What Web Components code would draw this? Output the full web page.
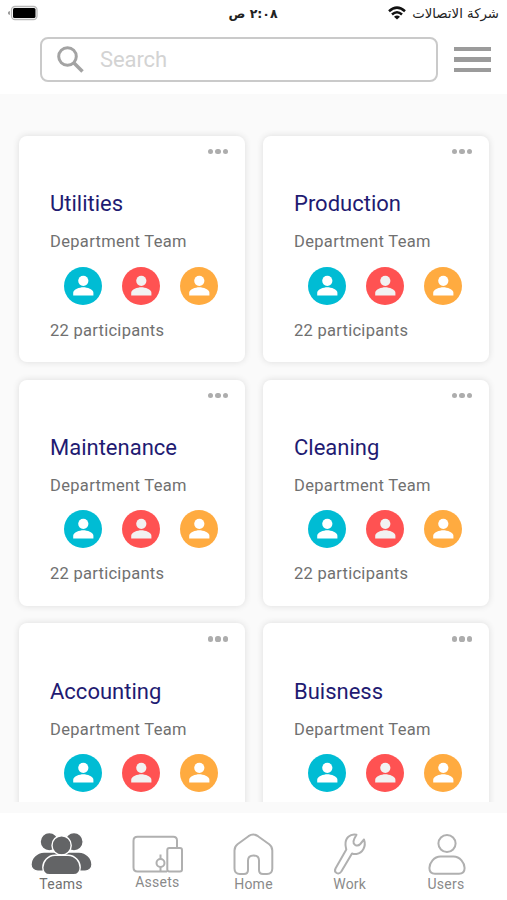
<!DOCTYPE html>
<html lang="en">
<head>
<meta charset="utf-8">
<title>Teams</title>
<style>
  html, body { margin: 0; height: 100%; }
  body { font-family: Roboto, sans-serif; background: #fff; overflow: hidden; }
</style>
</head>
<body>
<team-app></team-app>

<script>
(function () {
  /* Line icons for the tab bar, all drawn in the same 64x44 box. */
  const TAB_ICONS = {
    teams: `
      <g fill="#636466" stroke="#fff" stroke-width="1.4">
        <circle cx="20.3" cy="9.8" r="9.2"/>
        <circle cx="45" cy="9.8" r="9.2"/>
        <path d="M15 20H50C57.500 20 63 26.500 63 32.500C63 36.500 60 39.200 56 39.200H9C5 39.200 2 36.500 2 32.500C2 26.500 7.500 20 15 20Z"/>
        <circle cx="32.6" cy="13.4" r="9.6"/>
        <path d="M26 23.200H39C46.500 23.200 51.200 30 51.200 35.500C51.200 40 48.500 42.800 44.500 42.800H20.500C16.500 42.800 13.800 40 13.800 35.500C13.800 30 18.500 23.200 26 23.200Z"/>
      </g>`,
    assets: `
      <path d="M52 16V8.500Q52 4.800 48.300 4.800H12.500Q8.500 4.800 8.500 8.800V35.500Q8.500 39.500 12.500 39.500H42"/>
      <rect x="42.300" y="16" width="14.700" height="23.500" rx="2"/>
      <circle cx="35.500" cy="31" r="4"/>
      <path d="M35.500 22.500V27M35.500 35V39.500"/>`,
    home: `
      <path d="M27.500 4.200Q32.300 1 37 4.200L48.200 12.200Q51.300 14.500 51.300 18.500V36.500Q51.300 42 46 42H42Q38 42 38 38V28.500Q38 23.500 32.500 23.500Q27 23.500 27 28.500V38Q27 42 23 42H19Q13.500 42 13.500 36.500V18.500Q13.500 14.500 16.500 12.200Z"/>`,
    work: `
      <path d="M38.500 2.800C32 1.500 27 6 27.500 13Q27.800 15.500 28.300 17.500L17.500 36.500C15.500 40.500 20.500 43.500 23.300 39.500L34 21.500Q36 22.300 38.500 22C44.500 21 48.500 14.500 46 7.500L42.300 12Q40 14.500 37 12.800C34.500 11 35 8.500 38.500 2.800Z"/>`,
    users: `
      <circle cx="33" cy="11.500" r="8.600"/>
      <path d="M26.500 24.500H39.500C46 24.500 50.600 31 50.600 36C50.600 39.500 48.500 41.800 45 41.800H21C17.500 41.800 15.400 39.500 15.400 36C15.400 31 20 24.500 26.500 24.500Z"/>`
  };

  function define(name, markup) {
    customElements.define(name, class extends HTMLElement {
      constructor() {
        super();
        this.attachShadow({ mode: 'open' }).innerHTML = markup;
      }
    });
  }

  define('status-bar', `
    <style>
      :host {
        display: grid; grid-template-columns: 1fr auto 1fr; align-items: center; direction: rtl;
        height: 28px; padding: 0 8px 2px 7px; box-sizing: border-box;
        font: 13.300px 'DejaVu Sans', sans-serif; color: #222;
      }
      .carrier { display: flex; align-items: center; gap: 6px; white-space: nowrap; }
      .time { font-size: 12.500px; font-weight: 700; color: #222; }
      .battery { justify-self: end; display: block; }
      svg { display: block; }
    </style>
    <div class="carrier">
      <span class="name">شركة الاتصالات</span>
      <svg width="18" height="14" viewBox="0 0 18 14" fill="none" stroke="#111" stroke-width="2.500">
        <path d="M1 5.200Q9 -2 17 5.200M4 8.500Q9 4 14 8.500"/>
        <path d="M9 13.500L6 10.700Q9 8.500 12 10.700Z" fill="#111" stroke="none"/>
      </svg>
    </div>
    <span class="time">٢:٠٨ ص</span>
    <svg class="battery" width="31" height="16" viewBox="0 0 31 16">
      <rect x="4.500" y="1.500" width="25.500" height="13" rx="3.500" fill="#fff" stroke="#b8b8b8" stroke-width="1.300"/>
      <rect x="6" y="3" width="22.500" height="10" rx="1.500" fill="#000"/>
      <path d="M2.800 6V10Q1 9.500 1 8T2.800 6Z" fill="#888"/>
    </svg>`);

  define('search-bar', `
    <style>
      :host { display: flex; align-items: center; gap: 16px; padding: 9px 16px 12px 40px; }
      .field {
        flex: 1; display: flex; align-items: center; gap: 15px;
        height: 45px; padding-left: 15px; box-sizing: border-box;
        border: 2px solid #cacaca; border-radius: 8px;
        font-size: 22px; letter-spacing: -.1px; color: #d3d3d3;
      }
      .menu { width: 37px; display: grid; gap: 6px; }
      .menu i { height: 4.200px; background: #9b9b9b; }
    </style>
    <div class="field">
      <svg width="28" height="28" viewBox="0 0 28 28" fill="none" stroke="#a3a3a3">
        <circle cx="10.500" cy="10.500" r="8.800" stroke-width="3"/>
        <path d="M17 17L25.500 25.500" stroke-width="3.500"/>
      </svg>
      <slot></slot>
    </div>
    <div class="menu"><i></i><i></i><i></i></div>`);

  define('user-avatar', `
    <style>
      :host { display: block; width: 38px; height: 38px; border-radius: 50%; background: var(--tone); }
      svg { display: block; fill: var(--figure, #fff); }
    </style>
    <svg width="38" height="38" viewBox="0 0 38 38">
      <circle cx="19.300" cy="13.800" r="5.100"/>
      <path d="M9.200 28.500V25.800C9.200 22.300 15.500 20.200 19.300 20.200S29.400 22.300 29.400 25.800V28.500Z"/>
    </svg>`);

  define('team-card', `
    <style>
      :host {
        display: flex; flex-direction: column; box-sizing: border-box; height: 226px;
        padding: 13px 17px 0 31px; background: #fff; border-radius: 8px;
        box-shadow: 0 0 7px rgba(0, 0, 0, .12); color: #707070; font-size: 16.500px;
      }
      .more { align-self: flex-end; display: flex; gap: 2.300px; }
      .more i { width: 5.200px; height: 5.200px; border-radius: 50%; background: #adadad; }
      .title { margin-top: 36px; font-size: 22px; line-height: 28px; color: #1f1b72; }
      .kind { margin-top: 14px; line-height: 20px; letter-spacing: .330px; }
      .people { display: flex; gap: 20px; margin: 14.500px 0 0 14px; }
      .count { margin-top: 16px; line-height: 20px; letter-spacing: .270px; }
      :host([folded]) .count { display: none; }
    </style>
    <div class="more"><i></i><i></i><i></i></div>
    <div class="title"><slot></slot></div>
    <div class="kind">Department Team</div>
    <div class="people">
      <user-avatar style="--tone:#00bcd4"></user-avatar>
      <user-avatar style="--tone:#ff5252;--figure:#f2f2f2"></user-avatar>
      <user-avatar style="--tone:#ffab40"></user-avatar>
    </div>
    <div class="count">22 participants</div>`);

  class TabItem extends HTMLElement {
    connectedCallback() {
      this.attachShadow({ mode: 'open' }).innerHTML = `
        <style>
          :host {
            display: flex; flex-direction: column; align-items: center;
            font-size: 14px; line-height: 16px; letter-spacing: .250px; color: #8a8a8a;
          }
          :host([active]) { color: #707070; }
          :host([icon=assets]) .label { margin-top: -2px; }
          svg { display: block; }
        </style>
        <svg width="64" height="44" viewBox="0 0 64 44" fill="none" stroke="#b0b0b0"
          stroke-width="2" stroke-linejoin="round">${TAB_ICONS[this.getAttribute('icon')]}</svg>
        <div class="label"><slot></slot></div>`;
    }
  }
  customElements.define('tab-item', TabItem);

  define('tab-bar', `
    <style>
      :host {
        display: grid; grid-template-columns: repeat(5, 1fr); box-sizing: border-box;
        height: 87px; padding: 19px 13px 0; background: #fff;
      }
    </style>
    <slot></slot>`);

  define('team-app', `
    <style>
      :host { display: flex; flex-direction: column; height: 100vh; }
      main { flex: 1; min-height: 0; background: #fafafa; padding-bottom: 11px; }
      .list {
        height: 100%; overflow: hidden; box-sizing: border-box; padding: 42px 18px 0 19px;
        display: grid; grid-template-columns: 226px 226px; gap: 17.700px 18px; align-content: start;
      }
    </style>
    <status-bar></status-bar>
    <search-bar>Search</search-bar>
    <main>
      <div class="list">
        <team-card>Utilities</team-card>
        <team-card>Production</team-card>
        <team-card>Maintenance</team-card>
        <team-card>Cleaning</team-card>
        <team-card folded>Accounting</team-card>
        <team-card folded>Buisness</team-card>
      </div>
    </main>
    <tab-bar>
      <tab-item icon="teams" active>Teams</tab-item>
      <tab-item icon="assets">Assets</tab-item>
      <tab-item icon="home">Home</tab-item>
      <tab-item icon="work">Work</tab-item>
      <tab-item icon="users">Users</tab-item>
    </tab-bar>`);
})();
</script>
</body>
</html>
